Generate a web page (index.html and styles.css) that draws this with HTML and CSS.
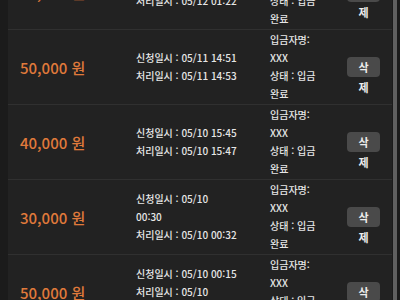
FILE: index.html
```html
<!DOCTYPE html>
<html lang="ko">
<head>
    <meta charset="UTF-8">
    <meta name="viewport" content="width=device-width, initial-scale=1.0">
    <title>입금 내역</title>
    <link rel="stylesheet" href="styles.css">
</head>
<body>
    <div class="page">
        <div class="side"></div>
        <div class="list">
            <div class="row first">
                <div class="amount">50,000 원</div>
                <div class="dates">신청일시 : 05/12 01:20<br>처리일시 : 05/12 01:22</div>
                <div class="info">입금자명:<br>XXX<br>상태 : 입금<br>완료</div>
                <div class="del-wrap"><span class="btn-del">삭제</span></div>
            </div>
            <div class="row">
                <div class="amount">50,000 원</div>
                <div class="dates">신청일시 : 05/11 14:51<br>처리일시 : 05/11 14:53</div>
                <div class="info">입금자명:<br>XXX<br>상태 : 입금<br>완료</div>
                <div class="del-wrap"><span class="btn-del">삭제</span></div>
            </div>
            <div class="row">
                <div class="amount">40,000 원</div>
                <div class="dates">신청일시 : 05/10 15:45<br>처리일시 : 05/10 15:47</div>
                <div class="info">입금자명:<br>XXX<br>상태 : 입금<br>완료</div>
                <div class="del-wrap"><span class="btn-del">삭제</span></div>
            </div>
            <div class="row">
                <div class="amount">30,000 원</div>
                <div class="dates">신청일시 : 05/10<br>00:30<br>처리일시 : 05/10 00:32</div>
                <div class="info">입금자명:<br>XXX<br>상태 : 입금<br>완료</div>
                <div class="del-wrap"><span class="btn-del">삭제</span></div>
            </div>
            <div class="row">
                <div class="amount">50,000 원</div>
                <div class="dates">신청일시 : 05/10 00:15<br>처리일시 : 05/10<br>00:17</div>
                <div class="info">입금자명:<br>XXX<br>상태 : 입금<br>완료</div>
                <div class="del-wrap"><span class="btn-del">삭제</span></div>
            </div>
        </div>
        <div class="scroll"><div class="thumb"></div></div>
    </div>
</body>
</html>
```

FILE: styles.css
```css
body {
    margin: 0;
    background: #1b1b1b;
    font-family: 'Noto Sans CJK KR', 'Noto Sans', sans-serif;
    color: #e6e6e6;
    overflow: hidden;
}
.page {
    display: flex;
    height: 300px;
    overflow: hidden;
}
.side {
    width: 8px;
    background: #1b1b1b;
}
.list {
    flex: 1;
    background: #222222;
}
.row {
    display: grid;
    grid-template-columns: 116px 134px 77px 33px;
    align-items: center;
    padding: 1px 0 1px 12px;
    border-bottom: 1px solid #303030;
}
.row.first {
    margin-top: -45px;
}
.amount {
    font-size: 15px;
    font-weight: 500;
    color: #e07a3b;
}
.dates, .info {
    font-size: 10px;
    font-weight: 500;
    line-height: 18px;
}
.info {
    width: 56px;
}
.del-wrap {
    height: 20px;
}
.btn-del {
    display: block;
    height: 20px;
    background: #4a4a4a;
    border-radius: 4px;
    font-size: 11px;
    font-weight: 700;
    line-height: 20px;
    text-align: center;
    padding: 0 8px;
    word-break: break-all;
    color: #ececec;
}
.scroll {
    width: 8px;
    display: flex;
    background: #1b1b1b;
}
.thumb {
    width: 4px;
    margin-left: 1px;
    background: #606060;
}
```
